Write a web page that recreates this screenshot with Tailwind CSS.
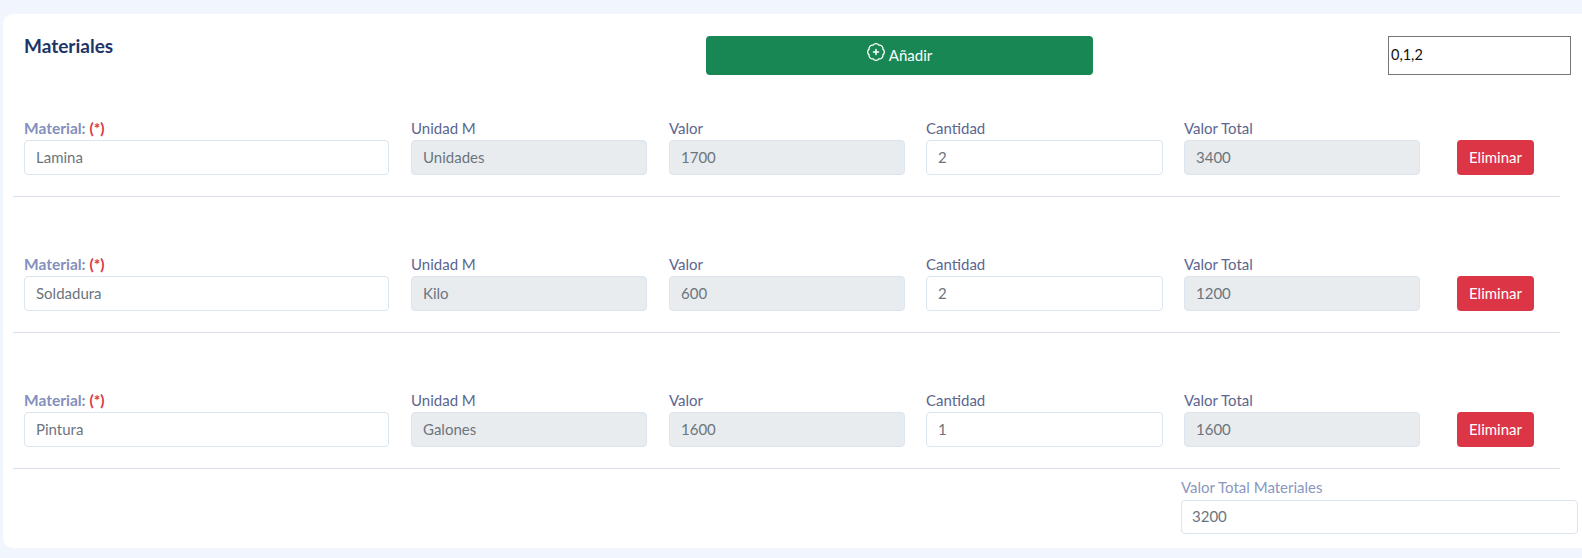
<!DOCTYPE html>
<html lang="es">
<head>
    <meta charset="UTF-8">
    <title>Materiales</title>
    <script src="https://cdn.jsdelivr.net/npm/@tailwindcss/browser@4"></script>
</head>
<body class="bg-[#f1f6fe] h-[558px] overflow-hidden font-['Lato',sans-serif] text-[15px]">
    <div class="ml-[3px] mt-[14px] h-[534px] bg-white rounded-l-[10px] pl-[10px] relative">

        <!-- Header -->
        <div class="flex pt-[22px] h-[61px]">
            <h2 class="ml-[11px] w-[682px] text-[19px] leading-[20px] font-bold text-[#1d3467]">Materiales</h2>
            <button class="w-[387px] h-[39px] bg-[#198754] text-white rounded-[4px] flex items-center justify-center gap-[4px]">
                <svg class="w-[18px] h-[18px] -mt-[7px]" viewBox="0 0 18 18" fill="none" stroke="currentColor" stroke-width="1.3" stroke-linecap="round">
                    <path d="M15.93 6.13A3.6 3.6 0 0 1 15.93 11.87A3.6 3.6 0 0 1 11.87 15.93A3.6 3.6 0 0 1 6.13 15.93A3.6 3.6 0 0 1 2.07 11.87A3.6 3.6 0 0 1 2.07 6.13A3.6 3.6 0 0 1 6.13 2.07A3.6 3.6 0 0 1 11.87 2.07A3.6 3.6 0 0 1 15.93 6.13Z"/>
                    <path d="M9 6.5v5M6.5 9h5" stroke-width="1.5"/>
                </svg>
                <span>Añadir</span>
            </button>
            <input value="0,1,2" class="ml-[295px] w-[183px] h-[39px] border border-[#767676] text-[#111] text-[14.5px] px-[2px] pb-[2px] bg-white">
        </div>

        <!-- Row 1 -->
        <div class="mt-[41px] ml-[11px] grid grid-cols-[365px_236px_236px_236px_235px_77px] gap-x-[22px] h-[59px]">
            <div>
                <label class="block h-[24px] leading-[25px] font-bold text-[15.5px] text-[#8390bd]">Material: <span class="text-[#dc3545]">(*)</span></label>
                <input value="Lamina" class="w-full h-[35px] px-[11px] pb-[2px] border border-[#dbe5f0] rounded-[4px] text-[#6c757d]">
            </div>
            <div>
                <label class="block h-[24px] leading-[25px] text-[#5c6690]">Unidad M</label>
                <input disabled value="Unidades" class="w-full h-[35px] px-[11px] pb-[2px] border border-[#dbe5f0] rounded-[4px] bg-[#e9ecef] text-[#6c757d]">
            </div>
            <div>
                <label class="block h-[24px] leading-[25px] text-[#5c6690]">Valor</label>
                <input disabled value="1700" class="w-full h-[35px] px-[11px] pb-[2px] border border-[#dbe5f0] rounded-[4px] bg-[#e9ecef] text-[#6c757d]">
            </div>
            <div class="-ml-[1px]">
                <label class="block h-[24px] leading-[25px] text-[#5c6690]">Cantidad</label>
                <input value="2" class="w-full h-[35px] px-[11px] pb-[2px] border border-[#dbe5f0] rounded-[4px] text-[#6c757d]">
            </div>
            <div class="-ml-[1px]">
                <label class="block h-[24px] leading-[25px] text-[#5c6690]">Valor Total</label>
                <input disabled value="3400" class="w-full h-[35px] px-[11px] pb-[2px] border border-[#dbe5f0] rounded-[4px] bg-[#e9ecef] text-[#6c757d]">
            </div>
            <div class="ml-[15px] mt-[24px]">
                <button class="w-[77px] h-[35px] bg-[#dc3545] text-white rounded-[4px]">Eliminar</button>
            </div>
        </div>
        <hr class="mt-[21px] mr-[22px] border-t border-[#d9dee6]">

        <!-- Row 2 -->
        <div class="mt-[55px] ml-[11px] grid grid-cols-[365px_236px_236px_236px_235px_77px] gap-x-[22px] h-[59px]">
            <div>
                <label class="block h-[24px] leading-[25px] font-bold text-[15.5px] text-[#8390bd]">Material: <span class="text-[#dc3545]">(*)</span></label>
                <input value="Soldadura" class="w-full h-[35px] px-[11px] pb-[2px] border border-[#dbe5f0] rounded-[4px] text-[#6c757d]">
            </div>
            <div>
                <label class="block h-[24px] leading-[25px] text-[#5c6690]">Unidad M</label>
                <input disabled value="Kilo" class="w-full h-[35px] px-[11px] pb-[2px] border border-[#dbe5f0] rounded-[4px] bg-[#e9ecef] text-[#6c757d]">
            </div>
            <div>
                <label class="block h-[24px] leading-[25px] text-[#5c6690]">Valor</label>
                <input disabled value="600" class="w-full h-[35px] px-[11px] pb-[2px] border border-[#dbe5f0] rounded-[4px] bg-[#e9ecef] text-[#6c757d]">
            </div>
            <div class="-ml-[1px]">
                <label class="block h-[24px] leading-[25px] text-[#5c6690]">Cantidad</label>
                <input value="2" class="w-full h-[35px] px-[11px] pb-[2px] border border-[#dbe5f0] rounded-[4px] text-[#6c757d]">
            </div>
            <div class="-ml-[1px]">
                <label class="block h-[24px] leading-[25px] text-[#5c6690]">Valor Total</label>
                <input disabled value="1200" class="w-full h-[35px] px-[11px] pb-[2px] border border-[#dbe5f0] rounded-[4px] bg-[#e9ecef] text-[#6c757d]">
            </div>
            <div class="ml-[15px] mt-[24px]">
                <button class="w-[77px] h-[35px] bg-[#dc3545] text-white rounded-[4px]">Eliminar</button>
            </div>
        </div>
        <hr class="mt-[21px] mr-[22px] border-t border-[#d9dee6]">

        <!-- Row 3 -->
        <div class="mt-[55px] ml-[11px] grid grid-cols-[365px_236px_236px_236px_235px_77px] gap-x-[22px] h-[59px]">
            <div>
                <label class="block h-[24px] leading-[25px] font-bold text-[15.5px] text-[#8390bd]">Material: <span class="text-[#dc3545]">(*)</span></label>
                <input value="Pintura" class="w-full h-[35px] px-[11px] pb-[2px] border border-[#dbe5f0] rounded-[4px] text-[#6c757d]">
            </div>
            <div>
                <label class="block h-[24px] leading-[25px] text-[#5c6690]">Unidad M</label>
                <input disabled value="Galones" class="w-full h-[35px] px-[11px] pb-[2px] border border-[#dbe5f0] rounded-[4px] bg-[#e9ecef] text-[#6c757d]">
            </div>
            <div>
                <label class="block h-[24px] leading-[25px] text-[#5c6690]">Valor</label>
                <input disabled value="1600" class="w-full h-[35px] px-[11px] pb-[2px] border border-[#dbe5f0] rounded-[4px] bg-[#e9ecef] text-[#6c757d]">
            </div>
            <div class="-ml-[1px]">
                <label class="block h-[24px] leading-[25px] text-[#5c6690]">Cantidad</label>
                <input value="1" class="w-full h-[35px] px-[11px] pb-[2px] border border-[#dbe5f0] rounded-[4px] text-[#6c757d]">
            </div>
            <div class="-ml-[1px]">
                <label class="block h-[24px] leading-[25px] text-[#5c6690]">Valor Total</label>
                <input disabled value="1600" class="w-full h-[35px] px-[11px] pb-[2px] border border-[#dbe5f0] rounded-[4px] bg-[#e9ecef] text-[#6c757d]">
            </div>
            <div class="ml-[15px] mt-[24px]">
                <button class="w-[77px] h-[35px] bg-[#dc3545] text-white rounded-[4px] pb-[1px]">Eliminar</button>
            </div>
        </div>
        <hr class="mt-[21px] mr-[22px] border-t border-[#d9dee6]">

        <!-- Total -->
        <div class="ml-[1168px] w-[397px] mt-[7px]">
            <label class="block h-[24px] leading-[23px] text-[#8a97c0]">Valor Total Materiales</label>
            <input value="3200" class="w-full h-[34px] px-[10px] pb-[2px] border border-[#dbe5f0] rounded-[4px] text-[#6c757d]">
        </div>
    </div>
</body>
</html>
